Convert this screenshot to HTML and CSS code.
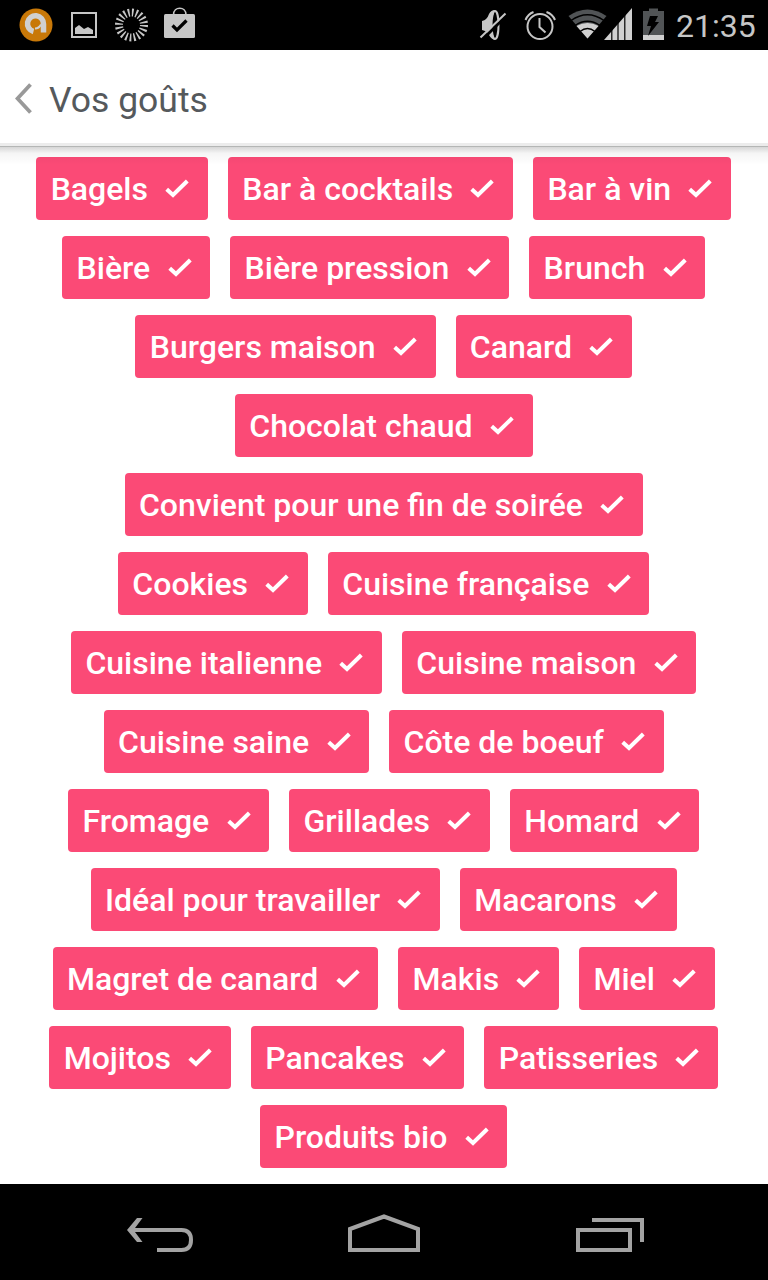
FILE: index.html
```
<!DOCTYPE html>
<html lang="fr">
<head>
    <meta charset="UTF-8">
    <meta name="viewport" content="width=device-width, initial-scale=1.0">
    <title>Vos goûts</title>
    <link rel="stylesheet" href="styles.css">
</head>
<body>
    <svg width="0" height="0" class="defs">
        <symbol id="check" viewBox="0 0 24 19">
            <path d="M1.700 10.200L8 16L22.300 2" fill="none" stroke="#fff" stroke-width="4"/>
        </symbol>
    </svg>

    <div class="status-bar">
        <svg class="status-icons" width="210" height="50" viewBox="0 0 210 50">
            <circle cx="36" cy="25" r="16.5" fill="#c87808"/>
            <path d="M33.500 31.500A8 8 0 1 1 43.500 24V32.500" fill="none" stroke="#d0d0d0" stroke-width="5.500"/>
            <path d="M35 28.500Q39 28.500 41 24.500" fill="none" stroke="#d0d0d0" stroke-width="2"/>
            <rect x="72" y="13" width="24" height="24" fill="none" stroke="#c6c6c6" stroke-width="2"/>
            <path d="M75 34V28L79 25L84 29L88 27L93 30V34Z" fill="#c6c6c6"/>
            <circle cx="131.500" cy="25" r="12.500" fill="none" stroke="#c6c6c6" stroke-width="8" stroke-dasharray="1.7 2.227"/>
            <path d="M173.500 15C173.500 6 186 6 186 15" fill="none" stroke="#c6c6c6" stroke-width="1.600"/>
            <rect x="164" y="14" width="31" height="24" rx="1.500" fill="#c6c6c6"/>
            <path d="M172.500 25.500L177 30L186.500 20.500" fill="none" stroke="#000" stroke-width="3.200"/>
        </svg>
        <svg class="status-icons" width="210" height="50" viewBox="460 0 210 50">
            <ellipse cx="495" cy="25" rx="3.500" ry="14" fill="none" stroke="#c6c6c6" stroke-width="2"/>
            <path d="M482 21Q487 20 489 14Q491 10 495 10Q492 16 492 25Q492 34 495 40Q491 39 489 35Q487 31 482 30Z" fill="#c6c6c6"/>
            <path d="M482.500 39.500L507 15" stroke="#000" stroke-width="3"/>
            <path d="M480.500 37.500L505.500 13.500" stroke="#c6c6c6" stroke-width="2"/>
            <g fill="none" stroke="#c6c6c6" stroke-width="2">
                <circle cx="540" cy="26.500" r="12.500"/>
                <path d="M539.500 18V27L545.500 32.500"/>
                <path d="M525.500 20Q528 14 533.500 12M546.500 12Q552.500 14 555 20"/>
            </g>
            <path d="M587.500 38.500L568.500 16Q587.500 3 606.500 16Z" fill="#515456"/>
            <path d="M587.500 38.500L576.500 26Q587.500 20 598.500 26Z" fill="#d0d0d0"/>
            <path d="M571 20.500Q587.500 9 604 20.500M575 25.500Q587.500 17 600 25.500M580 31.500Q587.500 25.500 595 31.500" fill="none" stroke="#000" stroke-width="1.500"/>
            <path d="M604 40L632 8V40Z" fill="#d0d0d0"/>
            <path d="M611.800 25V41M618 20V41M624.800 12V41" stroke="#000" stroke-width="1.200"/>
            <path d="M643 11H649V8.500H658V11H664V40H643Z" fill="#515456"/>
            <path d="M643 35H664V40H643Z" fill="#d0d0d0"/>
            <path d="M650 16H658L655 22H659L648 36L651 26H647Z" fill="#000"/>
        </svg>
        <span class="clock">21:35</span>
    </div>

    <div class="header">
        <svg width="18" height="32" viewBox="0 0 18 32">
            <path d="M15.500 1.500L2.500 15.500L15.500 29.500" fill="none" stroke="#999" stroke-width="3.800"/>
        </svg>
        <h1>Vos goûts</h1>
    </div>

    <div class="content">
        <div class="tag">Bagels<svg><use href="#check"/></svg></div>
        <div class="tag">Bar à cocktails<svg><use href="#check"/></svg></div>
        <div class="tag">Bar à vin<svg><use href="#check"/></svg></div>
        <div class="tag">Bière<svg><use href="#check"/></svg></div>
        <div class="tag">Bière pression<svg><use href="#check"/></svg></div>
        <div class="tag">Brunch<svg><use href="#check"/></svg></div>
        <div class="tag">Burgers maison<svg><use href="#check"/></svg></div>
        <div class="tag">Canard<svg><use href="#check"/></svg></div>
        <div class="tag">Chocolat chaud<svg><use href="#check"/></svg></div>
        <div class="tag">Convient pour une fin de soirée<svg><use href="#check"/></svg></div>
        <div class="tag">Cookies<svg><use href="#check"/></svg></div>
        <div class="tag">Cuisine française<svg><use href="#check"/></svg></div>
        <div class="tag">Cuisine italienne<svg><use href="#check"/></svg></div>
        <div class="tag">Cuisine maison<svg><use href="#check"/></svg></div>
        <div class="tag">Cuisine saine<svg><use href="#check"/></svg></div>
        <div class="tag">Côte de boeuf<svg><use href="#check"/></svg></div>
        <div class="tag">Fromage<svg><use href="#check"/></svg></div>
        <div class="tag">Grillades<svg><use href="#check"/></svg></div>
        <div class="tag">Homard<svg><use href="#check"/></svg></div>
        <div class="tag">Idéal pour travailler<svg><use href="#check"/></svg></div>
        <div class="tag">Macarons<svg><use href="#check"/></svg></div>
        <div class="tag">Magret de canard<svg><use href="#check"/></svg></div>
        <div class="tag">Makis<svg><use href="#check"/></svg></div>
        <div class="tag">Miel<svg><use href="#check"/></svg></div>
        <div class="tag">Mojitos<svg><use href="#check"/></svg></div>
        <div class="tag">Pancakes<svg><use href="#check"/></svg></div>
        <div class="tag">Patisseries<svg><use href="#check"/></svg></div>
        <div class="tag">Produits bio<svg><use href="#check"/></svg></div>
    </div>

    <div class="nav-bar">
        <svg width="68" height="36" viewBox="0 0 68 36">
            <path d="M14 14H54.500Q64 14 64 24Q64 34 54.500 34H30" fill="none" stroke="#a3a3a3" stroke-width="4"/>
            <path d="M10 2H15.500L6.500 14L15.500 26H10L0 14Z" fill="#a3a3a3"/>
            <path d="M4 12H20V16H4Z" fill="#a3a3a3"/>
        </svg>
        <svg width="72" height="38" viewBox="0 0 72 38">
            <path d="M2 36V15L36 2.500L70 15V36Z" fill="none" stroke="#a3a3a3" stroke-width="4"/>
        </svg>
        <svg width="68" height="34" viewBox="0 0 68 34">
            <path d="M2 12H54V32H2ZM16 2H66V24" fill="none" stroke="#a3a3a3" stroke-width="4"/>
        </svg>
    </div>
</body>
</html>
```

FILE: styles.css
```
body {
    font-family: Roboto, sans-serif;
    margin: 0;
    height: 1280px;
    display: flex;
    flex-direction: column;
    overflow: hidden;
    background-color: #fff;
}
.defs {
    position: absolute;
}
.status-bar {
    display: flex;
    flex: none;
    height: 50px;
    background-color: #000;
}
.status-icons + .status-icons {
    margin-left: 250px;
}
.clock {
    margin-left: 6px;
    color: #c6c6c6;
    font-size: 32px;
    line-height: 52px;
}
.header {
    display: flex;
    flex: none;
    align-items: center;
    box-sizing: border-box;
    height: 97px;
    padding: 1px 0 0 15px;
    border-bottom: 1px solid #b4b6b5;
    box-shadow: inset 0 -3px 0 #ececec;
}
h1 {
    margin: 2px 0 0 16px;
    color: #55595c;
    font-size: 35.5px;
    font-weight: 400;
    line-height: 44px;
}
.content {
    position: relative;
    display: flex;
    flex-wrap: wrap;
    justify-content: center;
    align-content: flex-start;
    gap: 16px 20px;
    box-sizing: border-box;
    height: 1037px;
    padding: 10px 24.5px 0 24px;
}
/* header shadow, falls over the first row */
.content::before {
    content: "";
    position: absolute;
    top: 0;
    left: 0;
    width: 100%;
    height: 18px;
    background: linear-gradient(rgba(0,0,0,0.16), rgba(0,0,0,0.04) 35%, rgba(0,0,0,0));
}
.tag {
    display: flex;
    box-sizing: border-box;
    height: 63px;
    padding: 0 18.7px 0 14.3px;
    border-radius: 4px;
    background-color: #fb4a76;
    color: #fff;
    font-size: 32px;
    font-weight: 500;
    line-height: 65px;
    white-space: nowrap;
}
.tag svg {
    width: 24px;
    height: 19px;
    margin: 22px 0 0 17.3px;
}
.nav-bar {
    display: flex;
    flex: none;
    align-items: flex-end;
    gap: 156px;
    box-sizing: border-box;
    height: 96px;
    padding: 0 0 28px 127px;
    background-color: #000;
}
.nav-bar svg:first-child {
    margin-right: -3px;
}
```
